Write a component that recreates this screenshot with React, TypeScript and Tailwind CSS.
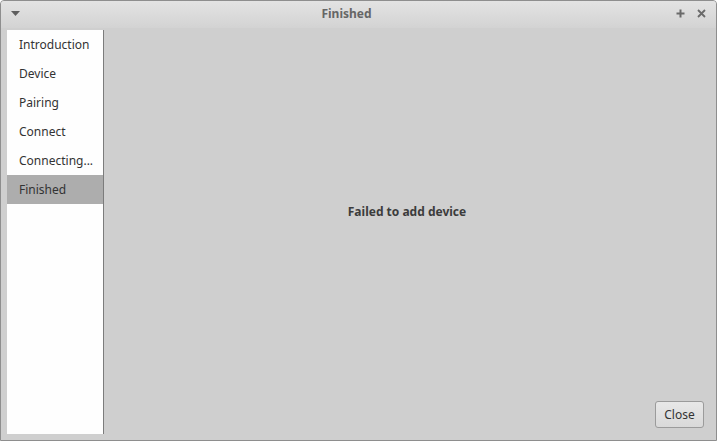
import React from "react";

const steps = ["Introduction", "Device", "Pairing", "Connect", "Connecting...", "Finished"];

function App() {
  const active = "Finished";

  return (
    <div
      className="w-[717px] h-[441px] flex flex-col bg-[#cfcfcf] border border-[#8e8e8e] rounded-t-[4px] overflow-hidden text-[#333333]"
      style={{ fontFamily: '"Noto Sans", "DejaVu Sans", sans-serif' }}
    >
      {/* Title bar */}
      <div className="h-[27px] shrink-0 flex items-center relative bg-gradient-to-b from-[#e3e3e3] to-[#d3d3d3]">
        <svg className="absolute left-[10px] top-[10px]" width="9" height="6" viewBox="0 0 9 6">
          <path d="M0 0 H9 L4.5 5 Z" fill="#5e5e5e" />
        </svg>
        <div className="flex-1 text-center text-[12px] font-bold text-[#666666] leading-none pr-[24px] pb-[2px]">Finished</div>
        <svg className="absolute right-[31px] top-[8px]" width="9" height="9" viewBox="0 0 9 9">
          <path d="M4.5 0.5 V8.5 M0.5 4.5 H8.5" stroke="#6a6a6a" strokeWidth="2" />
        </svg>
        <svg className="absolute right-[10px] top-[8px]" width="9" height="9" viewBox="0 0 9 9">
          <path d="M1 1 L8 8 M8 1 L1 8" stroke="#6a6a6a" strokeWidth="1.8" />
        </svg>
      </div>

      {/* Body */}
      <div className="flex-1 flex pl-[6px] pr-[6px] pt-[2px] pb-[6px] min-h-0">
        <div className="w-[97px] bg-[#fefefe] border-r border-[#7c7c7c] flex flex-col">
          {steps.map((s) => (
            <div
              key={s}
              className={`h-[29px] flex items-center pl-[12px] text-[12px] whitespace-nowrap ${
                s === active ? "bg-[#adadad]" : ""
              }`}
            >
              {s}
            </div>
          ))}
        </div>

        <div className="flex-1 flex flex-col">
          <div className="flex-1 flex items-center justify-center text-[12px] font-bold text-[#3c3c3c] pb-[7px]">
            Failed to add device
          </div>
          <div className="flex justify-end pr-[6px] pb-[6px]">
            <button className="w-[49px] h-[27px] rounded-[3px] border border-[#9b9b9b] bg-gradient-to-b from-[#e8e8e8] to-[#d9d9d9] text-[12px] text-[#333333]">
              Close
            </button>
          </div>
        </div>
      </div>
    </div>
  );
}

export default App;
